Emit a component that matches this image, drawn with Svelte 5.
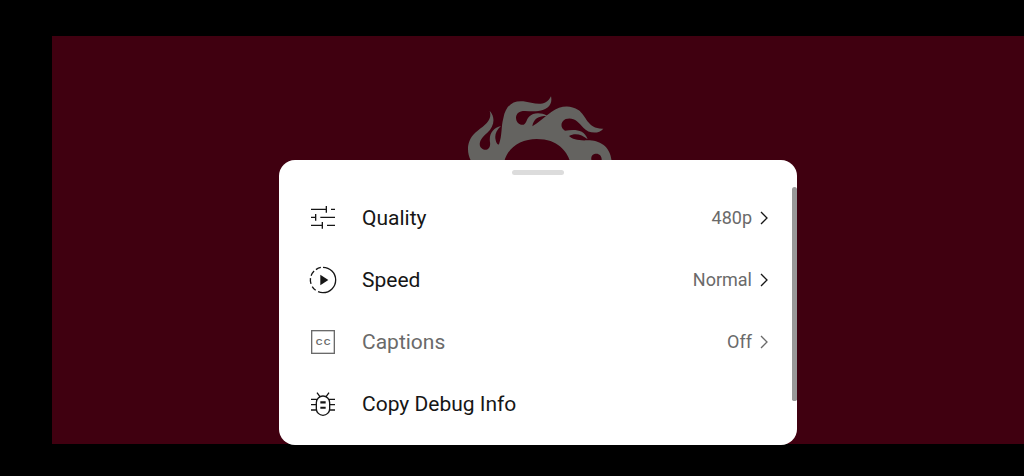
<script lang="ts">
  type Item = {
    icon: string;
    label: string;
    value?: string;
    disabled?: boolean;
  };

  const items: Item[] = [
    { icon: "quality", label: "Quality", value: "480p" },
    { icon: "speed", label: "Speed", value: "Normal" },
    { icon: "captions", label: "Captions", value: "Off", disabled: true },
    { icon: "debug", label: "Copy Debug Info" },
  ];
</script>

<main class="player">
  <div class="video">
    <svg class="emblem" viewBox="-6 33 510 216" aria-hidden="true">
      <path
        d="M48 228C30 192 40 157 68 137C95 117 112 104 104 77C122 97 118 125 97 143C75 160 68 180 80 190C93 201 108 191 105 172C101 145 115 129 138 123C124 135 118 150 122 165C124 175 129 181 132 178C142 150 138 125 145 100C152 60 175 46 205 49C235 53 270 70 288 34C294 60 275 75 250 78C225 82 200 72 188 85C178 98 184 115 198 119C215 122 212 105 222 95C235 82 258 82 276 92C250 92 235 102 232 124C250 112 270 95 290 80C315 62 345 58 370 75C395 92 397 133 445 131C430 149 400 145 385 128C370 110 355 95 332 102C315 110 316 130 330 137C355 134 387 130 398 163C380 148 360 143 342 153C352 163 370 167 395 166C430 165 465 180 470 228L440 228C442 208 425 201 412 211C408 216 408 222 410 228L345 228C335 200 310 162 245 162C200 162 160 185 148 228Z"
      />
    </svg>
  </div>

  <section class="sheet" aria-label="Settings">
    <div class="handle"></div>
    <ul>
      {#each items as item}
        <li>
          <button disabled={item.disabled}>
            <svg class="icon" viewBox="0 0 24 24" aria-hidden="true">
              {#if item.icon === "quality"}
                <path
                  class="solid"
                  d="M15 17h6v1h-6v-1zm-4 0H3v1h8v2h1v-5h-1v2zm3-9h1V3h-1v2H3v1h11v2zm4-3v1h3V5h-3zM6 14h1V9H6v2H3v1h3v2zm4-2h11v-1H10v1z"
                />
              {:else if item.icon === "speed"}
                <path
                  d="M12 2.5a9.5 9.5 0 0 1 0 19M10.4 2.6a9.5 9.5 0 0 0-3.7 1.6M5.3 5.3a9.5 9.5 0 0 0-2.2 3.5M2.6 10.6a9.5 9.5 0 0 0 .4 4.3M3.9 16.9a9.5 9.5 0 0 0 2.6 2.8M8.3 20.8a9.5 9.5 0 0 0 3.7.7"
                />
                <path class="solid" d="M10 8v8l6-4z" />
              {:else if item.icon === "captions"}
                <rect x="3.5" y="3.5" width="17" height="17" />
                <text y="14.6" text-anchor="middle">
                  <tspan x="9">C</tspan><tspan x="15">C</tspan>
                </text>
              {:else}
                <path
                  d="M7 11a5 5 0 0 1 10 0v4.5a5 5 0 0 1-10 0zM7.5 3.5l2.2 3M16.5 3.5l-2.2 3M3 8.5h4.5M3 12.5h4M3 16.5h4M16.5 8.5H21M17 12.5h4M17 16.5h4"
                />
                <path class="solid" d="M10 10h4v1.6h-4zM10 14h4v1.6h-4z" />
              {/if}
            </svg>
            <span class="label">{item.label}</span>
            {#if item.value}
              <span class="value">{item.value}</span>
              <svg class="chevron" viewBox="0 0 8 14" aria-hidden="true">
                <path d="M1 1L7 7L1 13" />
              </svg>
            {/if}
          </button>
        </li>
      {/each}
    </ul>
    <div class="scrollbar"></div>
  </section>
</main>

<style>
  :global(body) {
    margin: 0;
    background: #000;
  }
  .player {
    position: relative;
    box-sizing: border-box;
    display: flex;
    min-height: 100vh;
    padding: 36px 0 32px 52px;
    background: #000;
    font-family: Roboto, "Liberation Sans", sans-serif;
  }
  .video {
    flex: 1;
    display: flex;
    align-items: flex-start;
    justify-content: center;
    padding-top: 60px;
    background: #400010;
  }
  .emblem {
    width: 170px;
    height: 72px;
    fill: #646360;
  }
  /* bottom sheet over the video, centred on it */
  .sheet {
    position: absolute;
    left: 52px;
    right: 0;
    bottom: 31px;
    box-sizing: border-box;
    max-width: 518px;
    margin: 0 auto;
    padding: 10px 0;
    border-radius: 16px;
    background: #fff;
    overflow: hidden;
  }
  .handle {
    width: 52px;
    height: 5px;
    margin: 0 auto 12px;
    border-radius: 3px;
    background: #dcdcdc;
  }
  ul {
    margin: 0;
    padding: 0;
    list-style: none;
  }
  button {
    display: flex;
    align-items: center;
    width: 100%;
    height: 62px;
    padding: 0 29px 0 28px;
    border: none;
    background: none;
    color: #161616;
    font: inherit;
    font-size: 21px;
    line-height: 24px;
    text-align: left;
    cursor: pointer;
  }
  button:disabled {
    color: #6a6a6a;
    cursor: default;
  }
  .icon {
    flex: none;
    width: 32px;
    height: 32px;
    margin-right: 23px;
  }
  .icon,
  .chevron {
    fill: none;
    stroke: currentColor;
  }
  .icon .solid {
    fill: currentColor;
    stroke: none;
  }
  .icon text {
    fill: currentColor;
    stroke: none;
    font-family: "Liberation Sans", sans-serif;
    font-size: 7px;
    font-weight: 700;
  }
  .label {
    flex: 1;
  }
  .value {
    color: #6a6a6a;
    font-size: 18px;
  }
  .chevron {
    width: 8px;
    height: 14px;
    margin-left: 8px;
    stroke-width: 1.3;
  }
  .scrollbar {
    position: absolute;
    top: 27px;
    right: 0;
    width: 5px;
    height: 75%;
    border-radius: 3px 3px 2px 2px;
    background: #999;
  }
</style>
